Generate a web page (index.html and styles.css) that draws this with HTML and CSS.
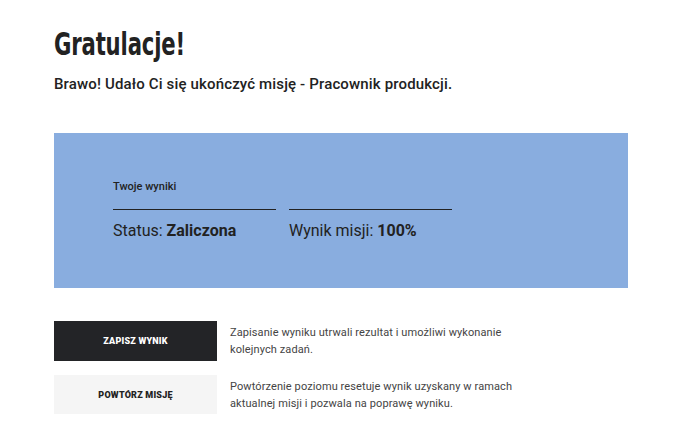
FILE: index.html
```html
<!DOCTYPE html>
<html lang="pl">
<head>
<meta charset="utf-8">
<title>Gratulacje!</title>
<link rel="stylesheet" href="styles.css">
</head>
<body>
<main class="page">
  <h1 class="title">Gratulacje!</h1>
  <p class="lead">Brawo! Udało Ci się ukończyć misję - Pracownik produkcji.</p>
  <section class="results">
    <div class="results-label">Twoje wyniki</div>
    <div class="results-grid">
      <div class="result">Status: <strong>Zaliczona</strong></div>
      <div class="result">Wynik misji: <strong>100%</strong></div>
    </div>
  </section>
  <div class="actions">
    <div class="action">
      <button class="btn btn-dark">ZAPISZ WYNIK</button>
      <p class="action-text">Zapisanie wyniku utrwali rezultat i umożliwi wykonanie kolejnych zadań.</p>
    </div>
    <div class="action">
      <button class="btn btn-light">POWTÓRZ MISJĘ</button>
      <p class="action-text">Powtórzenie poziomu resetuje wynik uzyskany w ramach aktualnej misji i pozwala na poprawę wyniku.</p>
    </div>
  </div>
</main>
</body>
</html>
```
FILE: styles.css
```css
* { box-sizing: border-box; }
html, body { margin: 0; padding: 0; background: #fff; }
body {
  font-family: Roboto, "Liberation Sans", Arial, sans-serif;
  color: #222;
}
.page {
  width: 574px;
  margin-left: 54px;
  padding-top: 25px;
}
.title {
  margin: 0;
  font-family: "DejaVu Sans Condensed", "DejaVu Sans", sans-serif;
  font-stretch: condensed;
  font-weight: 700;
  font-size: 32px;
  line-height: 38px;
  color: #222;
  letter-spacing: -0.2px;
  transform: scaleX(0.735);
  transform-origin: left center;
}
.lead {
  margin: 11px 0 0;
  font-size: 15px;
  line-height: 20px;
  font-weight: 500;
  letter-spacing: 0.15px;
  color: #222;
}
.results {
  margin-top: 39px;
  background: #89addf;
  padding: 46px 59px 40px;
  height: 155px;
}
.results-label {
  font-size: 11px;
  line-height: 15px;
  font-weight: 500;
  color: #222;
}
.results-grid {
  margin-top: 15px;
  display: grid;
  grid-template-columns: 163px 163px;
  column-gap: 13px;
}
.result {
  border-top: 1px solid #222;
  padding-top: 11px;
  font-size: 16px;
  line-height: 20px;
  color: #222;
}
.result strong { font-weight: 700; }
.actions {
  margin-top: 33px;
  display: flex;
  flex-direction: column;
  gap: 14px;
}
.action {
  display: flex;
  align-items: center;
  gap: 13px;
}
.btn {
  flex: 0 0 163px;
  width: 163px;
  height: 40px;
  border: 0;
  font-family: Roboto, "Liberation Sans", sans-serif;
  font-size: 9px;
  font-weight: 900;
  letter-spacing: 0.2px;
  cursor: pointer;
}
.btn-dark { background: #232427; color: #fff; }
.btn-light { background: #f5f5f5; color: #222; height: 39px; }
.action-text {
  margin: 0;
  width: 290px;
  font-size: 11px;
  line-height: 17px;
  color: #444;
  letter-spacing: 0.1px;
}
```
